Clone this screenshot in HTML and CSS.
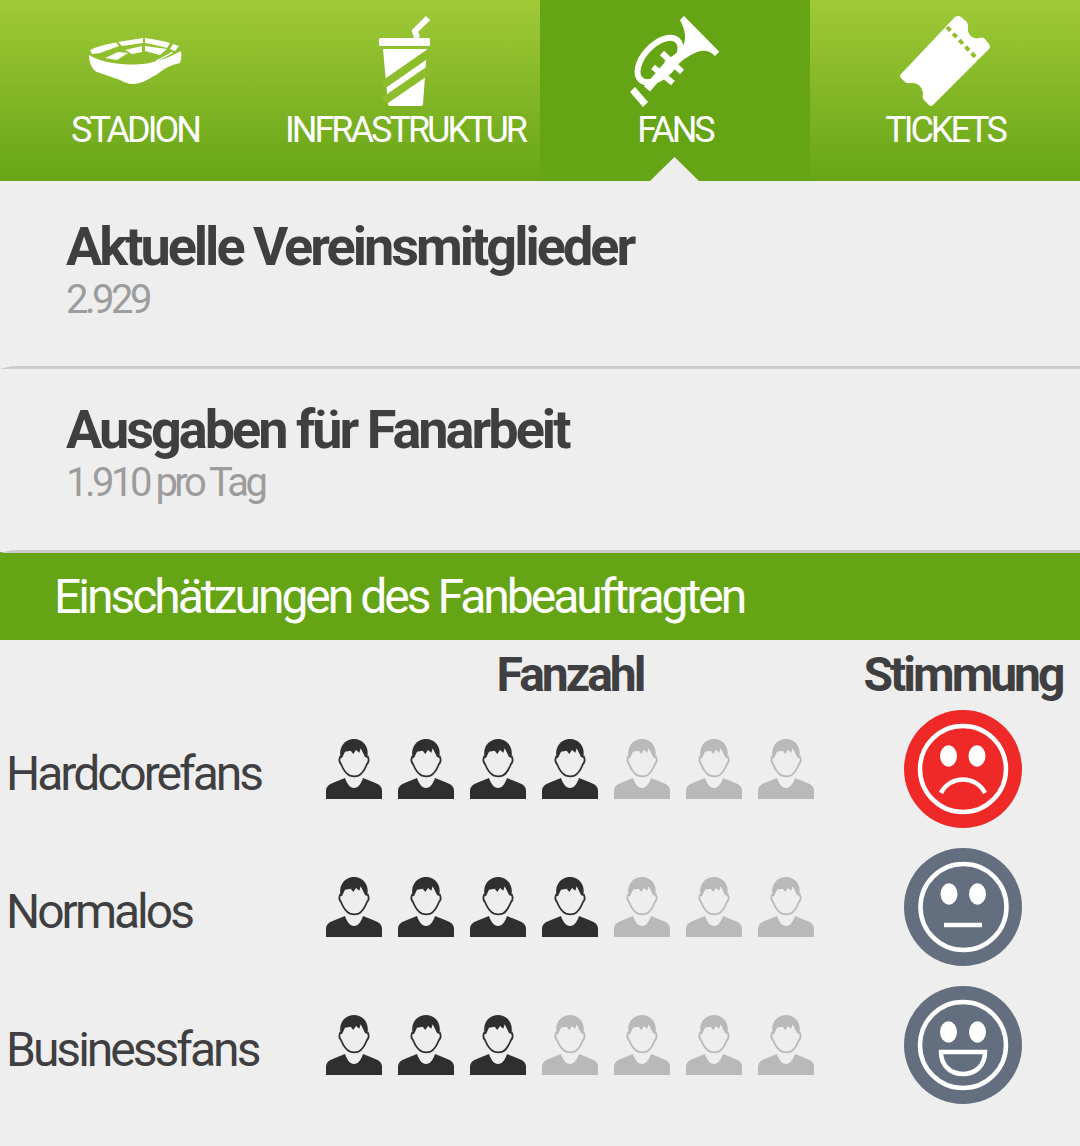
FILE: index.html
```html
<!DOCTYPE html>
<html lang="de">
<head>
  <meta charset="UTF-8">
  <title>Fans</title>
  <link rel="stylesheet" href="styles.css">
</head>
<body>

  <svg class="defs">
    <defs>
      <symbol id="person" viewBox="0 0 56 60">
        <path d="M0 60V51C1 46 4 45 9 43L19 39C21 45 24 49 28 49C32 49 35 45 37 39L47 43C52 45 55 46 56 51V60Z"/>
        <path d="M14.7 19C12 7 20 0 28 0C36 0 44 7 41.3 19L39 18L34.7 9.3L33.3 13.7L30 11L27.3 15L24.7 11.7L19 12.7L16 19Z"/>
        <path class="face" d="M14.500 17C13 20 13 23 15 25C17 30 20 35 24 36.700C27 37.500 30 37.500 32.500 36.700C36 35 39 30 41 25C43 23 43 20 41.500 17"/>
      </symbol>
    </defs>
  </svg>

  <nav class="tabs">
    <a class="tab">
      <svg class="tab-icon" viewBox="75 14 120 96">
        <!-- bowl -->
        <path class="solid" d="M89 55C96 59 102 61 110 62.500C118 64 126 64.500 133 64.500C142 64.500 148 63.500 153 62C162 60 172 56 181 51C182 56 181 60 180 63C172 65 167 67 163 70C159 73 156 75 152 77C146 81 139 84 133 84C128 84 124 82 120 80L97 72C92 70 89 62 89 55Z"/>
        <!-- upper stand -->
        <path class="solid" d="M90 50C96 47 106 44 116 42.500L119 46L100 53L92 54Z"/>
        <path class="solid" d="M118 42L143 38V43L122 46Z"/>
        <path class="solid" d="M145 38C154 39 163 41 170 43L167 48C160 46 152 44 145 43Z"/>
        <path class="solid" d="M173 44L179 46L175 51L170 49Z"/>
        <!-- lower stand -->
        <path class="solid" d="M105 58L118 52L128 53L117 60Z"/>
        <path class="solid" d="M125 50L142 46V52L132 54Z"/>
        <path class="solid" d="M145 46L167 49L160 55L145 51Z"/>
        <path class="solid" d="M155 61L172 52L173 53L157 61.500Z"/>
      </svg>
      <span>STADION</span>
    </a>
    <a class="tab">
      <svg class="tab-icon" viewBox="345 14 120 96">
        <path class="line line-thin" d="M417 38L415 31L428 18"/>
        <rect class="solid" x="379" y="38" width="51" height="8" rx="1.5"/>
        <path class="solid" d="M383 49H427L423 104Q423 106 421 106H391Q388 106 388 104Z"/>
        <path class="cut cut-c" d="M383 85L429 53M384 101L429 70"/>
      </svg>
      <span>INFRASTRUKTUR</span>
    </a>
    <a class="tab tab-active">
      <svg class="tab-icon" viewBox="615 14 120 96">
        <path class="solid" d="M680 20L684 16L719.300 51.700L715 56C711 52 708 51 705 50.700C698 50 690 55 683 60L673 69L664 62L678 52C686 45 688 35 680 20Z"/>
        <path class="line" d="M672 60L647 89"/>
        <ellipse class="ring" cx="659" cy="60" rx="27" ry="15" transform="rotate(-47 659 60)"/>
        <path class="line line-thin" d="M662 53L682 72M653 67L673 83"/>
        <path class="solid" d="M630 92L635 87L648 102L643 107Z"/>
      </svg>
      <span>FANS</span>
    </a>
    <a class="tab">
      <svg class="tab-icon" viewBox="885 14 120 96">
        <path class="solid" d="M955 17Q958 15 961 17L967 22Q968 24 968 28C967 34 973 40 979 38Q982 37 984 38L989 44Q991 47 989 49L933 105Q931 107 929 105L924 100Q922 98 923 94C923 88 918 82 911 83Q907 84 905 82L901 78Q899 76 901 74Z"/>
        <path class="cut cut-d" d="M947 27L979 61"/>
      </svg>
      <span>TICKETS</span>
    </a>
  </nav>

  <section class="fact">
    <h2>Aktuelle Vereinsmitglieder</h2>
    <p>2.929</p>
  </section>
  <section class="fact">
    <h2>Ausgaben für Fanarbeit</h2>
    <p>1.910 pro Tag</p>
  </section>

  <h3 class="band">Einschätzungen des Fanbeauftragten</h3>

  <div class="rating">
    <div></div>
    <div class="rating-head">Fanzahl</div>
    <div class="rating-head">Stimmung</div>

    <div class="rating-label">Hardcorefans</div>
    <div class="people">
      <svg class="person"><use href="#person"/></svg>
      <svg class="person"><use href="#person"/></svg>
      <svg class="person"><use href="#person"/></svg>
      <svg class="person"><use href="#person"/></svg>
      <svg class="person off"><use href="#person"/></svg>
      <svg class="person off"><use href="#person"/></svg>
      <svg class="person off"><use href="#person"/></svg>
    </div>
    <svg class="smiley smiley-bad" viewBox="0 0 118 118">
      <circle class="disc" cx="59" cy="59" r="59"/>
      <circle class="outline" cx="59" cy="59" r="43"/>
      <ellipse class="eye" cx="44.500" cy="46" rx="8.500" ry="10.700"/>
      <ellipse class="eye" cx="73" cy="46" rx="8.500" ry="10.700"/>
      <path class="mouth" d="M37 83C46 65 72 65 81 83"/>
    </svg>

    <div class="rating-label">Normalos</div>
    <div class="people">
      <svg class="person"><use href="#person"/></svg>
      <svg class="person"><use href="#person"/></svg>
      <svg class="person"><use href="#person"/></svg>
      <svg class="person"><use href="#person"/></svg>
      <svg class="person off"><use href="#person"/></svg>
      <svg class="person off"><use href="#person"/></svg>
      <svg class="person off"><use href="#person"/></svg>
    </div>
    <svg class="smiley" viewBox="0 0 118 118">
      <circle class="disc" cx="59" cy="59" r="59"/>
      <circle class="outline" cx="59.500" cy="59" r="43"/>
      <ellipse class="eye" cx="45" cy="46" rx="8.500" ry="10.700"/>
      <ellipse class="eye" cx="73.500" cy="46" rx="8.500" ry="10.700"/>
      <path class="mouth" d="M40 77H78"/>
    </svg>

    <div class="rating-label">Businessfans</div>
    <div class="people">
      <svg class="person"><use href="#person"/></svg>
      <svg class="person"><use href="#person"/></svg>
      <svg class="person"><use href="#person"/></svg>
      <svg class="person off"><use href="#person"/></svg>
      <svg class="person off"><use href="#person"/></svg>
      <svg class="person off"><use href="#person"/></svg>
      <svg class="person off"><use href="#person"/></svg>
    </div>
    <svg class="smiley" viewBox="0 0 118 118">
      <circle class="disc" cx="59" cy="59" r="59"/>
      <circle class="outline" cx="59" cy="59" r="43"/>
      <ellipse class="eye" cx="44.500" cy="46" rx="8.500" ry="10.700"/>
      <ellipse class="eye" cx="73.500" cy="46" rx="8.500" ry="10.700"/>
      <path class="mouth" d="M37 66H81C81 80 71 88 59 88C47 88 37 80 37 66Z"/>
    </svg>
  </div>

</body>
</html>
```

FILE: styles.css
```css
* {
  box-sizing: border-box;
}

body {
  margin: 0;
  height: 1146px;
  overflow: hidden;
  background: #eeeeee;
  font-family: Roboto, "Liberation Sans", sans-serif;
  color: #3f3f41;
}

.defs {
  display: none;
}

/* top tabs */
.tabs {
  display: grid;
  grid-template-columns: repeat(4, 270px);
  height: 181px;
  background: linear-gradient(#a0c937, #67a517);
}

.tab {
  position: relative;
  display: flex;
  flex-direction: column;
  align-items: center;
  padding-top: 14px;
  color: #fff;
  font-size: 36px;
  letter-spacing: -3px;
  line-height: 42px;
}

.tab span {
  margin-top: -1px;
}

.tab-active {
  background: #65a515;
}

.tab-active::after {
  content: "";
  position: absolute;
  left: 110px;
  bottom: 0;
  width: 49px;
  height: 24px;
  background: #eeeeee;
  clip-path: polygon(50% 0, 100% 100%, 0 100%);
}

.tab-icon {
  width: 120px;
  height: 96px;
}

.solid {
  fill: #fff;
}

.line {
  fill: none;
  stroke: #fff;
  stroke-width: 8;
}

.line-thin {
  stroke-width: 6;
}

.ring {
  fill: none;
  stroke: #fff;
  stroke-width: 6;
}

.cut {
  fill: none;
}

.cut-c {
  stroke: #8dbc2c;
  stroke-width: 8;
}

.cut-d {
  stroke: #90be2d;
  stroke-width: 4;
  stroke-dasharray: 5 4;
}

/* fact blocks */
.fact {
  position: relative;
  height: 187px;
  padding: 36px 0 0 66px;
}

.fact + .fact {
  height: 184px;
  padding-top: 32px;
}

.fact + .fact::before,
.band::before {
  content: "";
  position: absolute;
  left: 0;
  right: 0;
  top: -2px;
  height: 3px;
  background: #cccccc;
  clip-path: polygon(12px 0, 100% 0, 100% 100%, 0 100%);
}

.fact h2 {
  margin: 0;
  font-size: 54px;
  font-weight: 700;
  letter-spacing: -3px;
  line-height: 60px;
}

.fact p {
  margin: 2px 0 0;
  font-size: 40px;
  letter-spacing: -3.500px;
  line-height: 42px;
  color: #9c9c9c;
}

.band {
  position: relative;
  margin: 0;
  height: 88px;
  padding: 1px 0 0 54px;
  background: #65a515;
  color: #fff;
  font-size: 48px;
  font-weight: 400;
  letter-spacing: -3px;
  line-height: 88px;
}

/* rating table */
.rating {
  display: grid;
  grid-template-columns: 326px 520px 234px;
  grid-template-rows: 60px repeat(3, 138px);
  align-items: center;
}

.rating-head {
  padding-top: 9px;
  font-size: 48px;
  font-weight: 700;
  letter-spacing: -3px;
  text-align: center;
}

.rating-head:nth-child(2) {
  padding-right: 32px;
}

.rating-label {
  padding: 8px 0 0 6px;
  font-size: 48px;
  letter-spacing: -3px;
}

.people {
  display: flex;
  gap: 16px;
}

/* color reaches the shared symbol through inheritance */
.person {
  width: 56px;
  height: 60px;
  color: #2f2f2f;
  fill: #2f2f2f;
}

.person.off {
  color: #b9b9b9;
  fill: #b9b9b9;
}

.face {
  fill: none;
  stroke: currentColor;
  stroke-width: 1.800;
}

.smiley {
  width: 118px;
  height: 118px;
  justify-self: center;
}

.disc {
  fill: #636e7f;
}

.smiley-bad .disc {
  fill: #ef2828;
}

.outline,
.mouth {
  fill: none;
  stroke: #fff;
  stroke-width: 4.500;
}

.eye {
  fill: #fff;
}
```
